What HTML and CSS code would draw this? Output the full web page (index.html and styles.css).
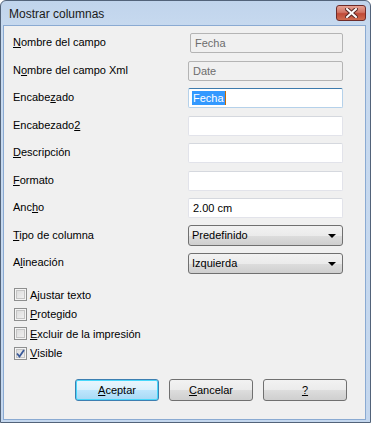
FILE: index.html
```html
<!DOCTYPE html>
<html lang="es">
<head>
    <meta charset="UTF-8">
    <title>Mostrar columnas</title>
    <link rel="stylesheet" href="styles.css">
</head>
<body>
<div class="window">
    <div class="titlebar">
        <span class="title">Mostrar columnas</span>
        <button class="close" type="button">
            <svg width="13" height="10" viewBox="0 0 13 10">
                <path d="M2 1 L11 9 M11 1 L2 9" stroke="#5a2a26" stroke-width="4" stroke-linecap="square"/>
                <path d="M2 1 L11 9 M11 1 L2 9" stroke="#ffffff" stroke-width="2" stroke-linecap="square"/>
            </svg>
        </button>
    </div>
    <div class="client">
        <div class="form">
            <label><u>N</u>ombre del campo</label>
            <div class="field disabled shift">Fecha</div>

            <label>N<u>o</u>mbre del campo Xml</label>
            <div class="field disabled">Date</div>

            <label>Encabe<u>z</u>ado</label>
            <div class="field focused"><span class="sel">Fecha</span></div>

            <label>Encabezado<u>2</u></label>
            <div class="field"></div>

            <label><u>D</u>escripción</label>
            <div class="field"></div>

            <label><u>F</u>ormato</label>
            <div class="field"></div>

            <label>Anc<u>h</u>o</label>
            <div class="field">2.00 cm</div>

            <label><u>T</u>ipo de columna</label>
            <div class="combo">Predefinido<span class="arrow"></span></div>

            <label>A<u>l</u>ineación</label>
            <div class="combo">Izquierda<span class="arrow"></span></div>
        </div>

        <div class="checks">
            <div class="check"><span class="box"></span>A<u>j</u>ustar texto</div>
            <div class="check"><span class="box"></span><u>P</u>rotegido</div>
            <div class="check"><span class="box"></span><u>E</u>xcluir de la impresión</div>
            <div class="check"><span class="box checked">
                <svg width="9" height="9" viewBox="0 0 9 9">
                    <path d="M1 4.5 L3.5 7.5 L8 1" fill="none" stroke="#3a5a9a" stroke-width="1.8"/>
                </svg>
            </span><u>V</u>isible</div>
        </div>

        <div class="buttons">
            <button class="btn default" type="button"><u>A</u>ceptar</button>
            <button class="btn" type="button"><u>C</u>ancelar</button>
            <button class="btn" type="button"><u>?</u></button>
        </div>
    </div>
</div>
</body>
</html>
```

FILE: styles.css
```css
body {
    margin: 0;
    font-family: "Liberation Sans", Arial, sans-serif;
    font-size: 11px;
    color: #000;
    background: #fff;
}
.window {
    width: 371px;
    height: 423px;
    box-sizing: border-box;
    border: 1px solid #52637a;
    border-radius: 6px 6px 0 0;
    background: linear-gradient(#c0d4ec, #c8daef 30px, #c4d7ee);
    padding: 0 4px 2px 2px;
    display: flex;
    flex-direction: column;
}
.titlebar {
    height: 24px;
    display: flex;
    align-items: center;
    position: relative;
}
.title {
    font-size: 12px;
    color: #1a1a1a;
    padding-left: 6px;
    margin-top: 2px;
}
.close {
    position: absolute;
    left: 333px;
    top: 4px;
    width: 30px;
    height: 16px;
    padding: 0;
    border: 1px solid #6e2c2a;
    border-radius: 3px;
    background: linear-gradient(#e6a294, #d27565 45%, #c04a37 55%, #cf6c50);
    display: flex;
    align-items: center;
    justify-content: center;
}
.client {
    flex: 1;
    background: #f0f0f0;
    border: 1px solid #8aaad2;
    padding: 7px 0 0 9px;
}
.form {
    display: grid;
    grid-template-columns: 175px 155px;
    grid-auto-rows: 20px;
    row-gap: 7.5px;
    align-items: center;
}
.form label {
    align-self: center;
    margin-top: -2px;
}
.field {
    height: 20px;
    box-sizing: border-box;
    border: 1px solid #e2e3ea;
    border-top-color: #d5d8de;
    border-radius: 2px;
    background: #fff;
    padding: 0 4px;
    line-height: 18px;
}
.field.disabled {
    background: #f0f0f0;
    border-color: #b4b4b4;
    color: #6d6d6d;
}
.field.shift {
    margin-left: 2px;
}
.field.focused {
    border-color: #b5d1ea;
    border-top-color: #3d7bad;
    padding-left: 3px;
}
.sel {
    background: #3399ff;
    color: #fff;
    padding: 1px;
    border-right: 1px solid #c86a00;
}
.combo {
    height: 21px;
    box-sizing: border-box;
    border: 1px solid #707070;
    border-radius: 3px;
    background: linear-gradient(#f2f2f2, #ebebeb 50%, #dddddd 50%, #cfcfcf);
    padding: 0 3px;
    line-height: 19px;
    position: relative;
}
.arrow {
    position: absolute;
    right: 6px;
    top: 8px;
    border-left: 4px solid transparent;
    border-right: 4px solid transparent;
    border-top: 4px solid #000;
}
.checks {
    margin-top: 12px;
    padding-left: 1px;
}
.check {
    height: 19.5px;
    display: flex;
    align-items: center;
}
.box {
    width: 13px;
    height: 13px;
    box-sizing: border-box;
    border: 1px solid #8e8f8f;
    background: linear-gradient(135deg, #d8d8d8, #f4f4f4);
    box-shadow: inset 0 0 0 1px #f4f4f4, inset 0 0 0 2px #c4c4c4;
    margin-right: 3px;
    display: flex;
    align-items: center;
    justify-content: center;
}
.buttons {
    margin-top: 16px;
    margin-left: 62px;
    display: flex;
    gap: 10px;
}
.btn {
    width: 84px;
    height: 22px;
    border: 1px solid #707070;
    border-radius: 3px;
    background: linear-gradient(#f2f2f2, #ebebeb 50%, #dddddd 50%, #cfcfcf);
    font-family: "Liberation Sans", Arial, sans-serif;
    font-size: 11px;
    color: #000;
    padding: 0;
}
.btn.default {
    border-color: #3c7fb1;
    box-shadow: inset 0 0 0 1px #48d8fb;
    background: linear-gradient(#eaf6fd, #d9f0fc 50%, #bee6fd 50%, #a7d9f5);
}
```
